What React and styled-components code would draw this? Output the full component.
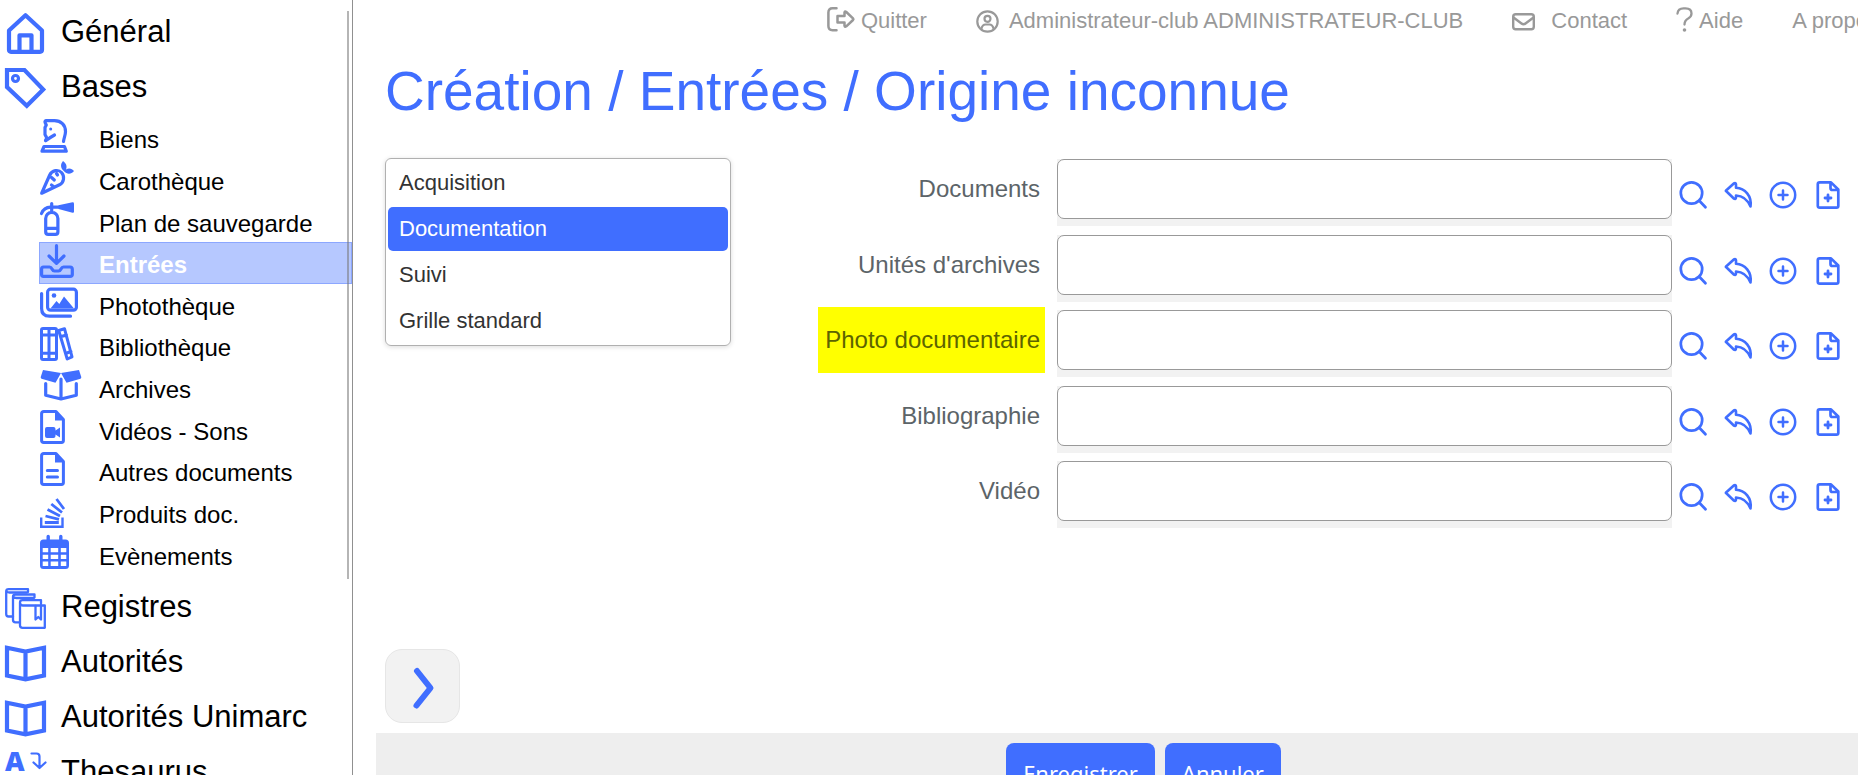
import { useState } from "react";
import styled, { createGlobalStyle, css } from "styled-components";

/* =========================
    Theme values
========================= */

const BLUE = "#406eff";
const GREY = "#999999";

const GlobalStyle = createGlobalStyle`
  * {
    box-sizing: border-box;
  }

  body {
    margin: 0;
    background: #ffffff;
    font-family: "Liberation Sans", Arial, sans-serif;
    color: #000000;
  }

  a {
    color: inherit;
    text-decoration: none;
  }

  svg {
    display: block;
    flex-shrink: 0;
    overflow: visible;
  }
`;

/* =========================
    Icons
========================= */

const Icon = styled.svg`
  fill: none;
  stroke: currentColor;
  stroke-linecap: round;
  stroke-linejoin: round;

  .solid {
    fill: currentColor;
    stroke: none;
  }
`;

const HomeIcon = () => (
  <Icon width="41" height="41" strokeWidth="4.2">
    <path d="M4 17.5 20.5 2.2 37 17.5V36.8q0 2-2 2H6q-2 0-2-2z" />
    <path d="M14.5 38V22.3h12V38" />
  </Icon>
);

const TagIcon = () => (
  <Icon width="41" height="41" strokeWidth="4.2">
    <path d="M2 2h17.5L38.2 21.5 21.8 37.8 2 19z" strokeLinejoin="miter" />
    <circle cx="10.5" cy="10.5" r="3" strokeWidth="3.2" />
  </Icon>
);

const RegisterIcon = () => (
  <Icon width="41" height="41" strokeWidth="2.3">
    <path d="M8 28.5H3.5Q1.2 28.5 1.2 26V3.5q0-2.3 2.5-2.3H23V4M1.2 3Q2 4.5 4.5 4.500H22" />
    <path d="M14.500 34.300H10.500Q8 34.300 8 32V9q0-2.500 2.500-2.500H29.500v3M8 8.500Q9 10 11.500 10H29" />
    <path d="M36 15.500V12.200H17.500Q15 12.200 15 14.500V37.500Q15 39.800 17.500 39.800H39.800V17.500H18Q15.500 17.500 15 15" />
    <path d="M30.500 18V31.500L33.300 29 36 31.500V18" />
  </Icon>
);

const BookIcon = () => (
  <Icon width="41" height="37" strokeWidth="4.200">
    <path
      d="M2 2.800 20.500 6.500 39 2.800V30.500L20.500 34.300 2 30.500zM20.500 6.500V34.300"
      strokeLinejoin="miter"
    />
  </Icon>
);

const ThesaurusIcon = () => (
  <Icon width="41" height="44" strokeWidth="2.200">
    <text
      className="solid"
      x="0"
      y="19"
      fontFamily="Noto Sans, sans-serif"
      fontWeight="900"
      fontSize="27"
    >
      A
    </text>
    <path d="M26.500 1.500h5q3 0 3 3V15.500M28.500 10.500l6 5.500 6-5.500" />
  </Icon>
);

const KnightIcon = () => (
  <Icon width="42" height="34" strokeWidth="3.200">
    <path d="M4 27.500h20.500L26.300 32.200H2z" />
    <path d="M23.500 22.500C24 18.500 25.500 16 25.500 12.500 25.500 6 21 1.700 14.500 1.700H6Q4.200 2 5.500 4.500L6.300 6 5 8.500V15.500L6.800 19 5.500 21.500" />
    <path d="M6 21.500Q10 18.500 14.500 16" />
    <circle className="solid" cx="10.700" cy="10" r="1.500" />
  </Icon>
);

const CarrotIcon = () => (
  <Icon width="42" height="34" strokeWidth="3.200">
    <path d="M1.700 32.200 9.500 14.500C12 8.800 18.500 8.300 21.500 11.500 25 15.500 24 21.300 19.500 23.800z" />
    <path d="M11.500 16.500 14.300 19M16.500 12.500 17.500 14M11.500 24 13.500 25.500" />
    <path className="solid" d="M23.800 10C20 6.500 20.500 3 23 0 26.500 2.500 27.300 5.500 26 8.500 29 6.500 32 7.500 34 10 31 13.500 27 13.500 23.800 10z" />
  </Icon>
);

const ExtinguisherIcon = () => (
  <Icon width="42" height="34" strokeWidth="3.200">
    <path d="M5.700 30V16.500a6.100 6.100 0 0 1 12.200 0V30q0 2.300-2.500 2.300H8.200q-2.500 0-2.500-2.300zM6 26.300H18M11.700 1.500V9" />
    <path d="M1.500 11.500Q4 5.500 10.500 5.200H20" />
    <path className="solid" d="M18.500 3.300 32.500.300Q34 .200 34 1.500V9.500Q34 11 32.500 10.700L18.500 7z" />
  </Icon>
);

const InboxIcon = () => (
  <Icon width="42" height="34" strokeWidth="3.200">
    <path d="M16.500 1.700V18.500M9 12 16.500 19.300 24 12" />
    <path d="M3.500 23H9.500Q11 23 12 25T14.500 27H18.500Q20 27 21 25T23.500 23H30Q32.300 23 32.300 25.300V30.500Q32.300 32.300 30 32.300H3.500Q1.600 32.300 1.600 30.500V25Q1.600 23 3.500 23z" />
  </Icon>
);

const PhotosIcon = () => (
  <Icon width="42" height="34" strokeWidth="3.200">
    <rect x="7.600" y="3.200" width="28.800" height="21" rx="3" />
    <path d="M1.600 7.500V22.500Q1.600 30.200 9.500 30.200H30.500" />
    <circle className="solid" cx="14" cy="9.500" r="2.300" />
    <path className="solid" d="M10.500 22.500 16.500 15 19.300 18 24 10.500 34 22.500z" />
  </Icon>
);

const BooksIcon = () => (
  <Icon width="42" height="34" strokeWidth="3">
    <rect x="1.500" y="1.500" width="15" height="31" rx="1.500" />
    <path d="M9 1.500V32.500M1.500 8H16.500M1.500 26.300H16.500" />
    <path d="M18.700 3.500 24.500 1.700 32 29.800 27.200 32 18.700 3.500M20.500 9.800 26.500 8M25.500 26.500 31 24.500" />
  </Icon>
);

const BoxOpenIcon = () => (
  <Icon width="42" height="34" strokeWidth="3.200">
    <path className="solid" d="M3 1 21 4 15.500 13.800 1.500 9.800Q.300 9 .800 7.800zM39 1 21 4 26.500 13.800 40.500 9.800Q41.700 9 41.200 7.800z" />
    <path d="M5.700 14.500V26.300L21 30 36.300 26.300V14.500M21 10V30" />
  </Icon>
);

const FileShape = () => (
  <>
    <path d="M3.800 1.600H16L23.400 9.500V30.500Q23.400 32.400 21.500 32.400H3.800Q1.600 32.400 1.600 30.500V3.500Q1.600 1.600 3.800 1.600z" />
    <path className="solid" d="M15 1V10.500H24.500z" />
  </>
);

const FileVideoIcon = () => (
  <Icon width="42" height="34" strokeWidth="3">
    <FileShape />
    <path className="solid" d="M7 17H13.500Q15.500 17 15.500 19V20.500L20 17.500V27.500L15.500 24.500V26Q15.500 28 13.500 28H7Q5 28 5 26V19Q5 17 7 17z" />
  </Icon>
);

const FileLinesIcon = () => (
  <Icon width="42" height="34" strokeWidth="3">
    <FileShape />
    <path d="M7.300 18.500H17.500M7.300 25H17.500" />
  </Icon>
);

const StackIcon = () => (
  <Icon width="42" height="34" strokeWidth="2.800">
    <g strokeLinecap="butt" strokeLinejoin="miter" transform="translate(0 1)">
      <path d="M1.200 22.500V31.700H22.500V22.500" strokeWidth="2.400" />
      <path d="M4.800 27.500H18.800M5.500 21 19 24.300M7.500 14.500 20 21M11.300 9 22 17.500M16.500 4 24 14" />
    </g>
  </Icon>
);

const CalendarIcon = () => (
  <Icon width="42" height="34" strokeWidth="3.400">
    <path d="M8.200 1.500V7M20.800 1.500V7" />
    <path
      className="solid"
      fillRule="evenodd"
      d="M3.500 4.500h22q3.500 0 3.500 3.500v22.500q0 3.500-3.500 3.500h-22q-3.500 0-3.500-3.500V8q0-3.500 3.500-3.500zM2.700 13v4.200h5.500V13zM10.700 13v4.200h7.500V13zM20.800 13v4.200h5.500V13zM2.700 19.800v4.200h5.500v-4.200zM10.700 19.800v4.200h7.500v-4.200zM20.800 19.800v4.200h5.500v-4.200zM2.700 26.600V31h5.500v-4.400zM10.700 26.600V31h7.500v-4.400zM20.800 26.600V31h5.500v-4.400z"
    />
  </Icon>
);

const QuitIcon = () => (
  <Icon width="28" height="28" strokeWidth="2.500">
    <path d="M9.500 1.300H5.500Q1.400 1.300 1.400 5.500V19Q1.400 23.200 5.500 23.200H9.500" />
    <path d="M10.500 9H17.500V5.500Q17.800 3.800 19.300 5L26 11.300Q26.800 12.200 26 13L19.300 19.300Q17.800 20.300 17.500 18.800V15.500H10.500z" />
  </Icon>
);

const UserIcon = () => (
  <Icon width="23" height="23" strokeWidth="2.200">
    <circle cx="11.500" cy="11.500" r="10.200" />
    <circle cx="11.500" cy="8.800" r="3" />
    <path d="M5.500 18.500Q6.500 14.500 9.500 14.500H13.500Q16.500 14.500 17.500 18.500" />
  </Icon>
);

const MailIcon = () => (
  <Icon width="23" height="17" strokeWidth="2.400">
    <rect x="1.200" y="1.200" width="20.600" height="15" rx="2.500" />
    <path d="M1.500 4.500 9.500 10.500Q11.500 12 13.500 10.500L21.500 4.500" />
  </Icon>
);

const HelpIcon = () => (
  <Icon width="17" height="28" strokeWidth="2.300">
    <path d="M1.500 6.500Q2 1.300 7.500 1.300H9.500Q15.500 1.300 15.500 6.500 15.500 9.500 12.500 11.300 8.500 13.500 8.500 17.500" />
    <circle className="solid" cx="8.500" cy="23" r="1.800" />
  </Icon>
);

const SearchIcon = () => (
  <Icon width="28" height="28" strokeWidth="2.700">
    <circle cx="12.500" cy="12" r="10.700" />
    <path d="M20.300 19.800 26.500 26.300" />
  </Icon>
);

const ReplyIcon = () => (
  <Icon width="28" height="28" strokeWidth="2.600">
    <path d="M1.800 9.800 9.800 2.500Q11.800 1.500 12 3.500V6.800C21 7.300 28 15 26.500 25.500 23.500 18.500 19 14.800 12 14.500V16.500Q11.800 18.500 9.800 17.500z" />
  </Icon>
);

const AddIcon = () => (
  <Icon width="28" height="28" strokeWidth="2.500">
    <circle cx="14" cy="14" r="12.200" />
    <path d="M14 9.500V18.500M9.500 14H18.500" />
  </Icon>
);

const FilePlusIcon = () => (
  <Icon width="28" height="28" strokeWidth="2.700">
    <path d="M5.700 1.400H17L24.300 8.500V25Q24.300 26.600 22.500 26.600H5.700Q3.800 26.600 3.800 25V3Q3.800 1.400 5.700 1.400zM16.500 1.500V7Q16.500 9 18.500 9H24" />
    <path d="M14 14V20M11 17H17" strokeWidth="2.800" />
  </Icon>
);

const NextIcon = () => (
  <Icon width="28" height="42" strokeWidth="6">
    <path d="M8 4 21.500 21 7.500 38.500" />
  </Icon>
);

/* =========================
    Sidebar
========================= */

const Page = styled.div`
  display: flex;
  height: 100vh;
  overflow: hidden;
`;

const Sidebar = styled.nav`
  flex: 0 0 353px;
  padding-top: 4px;
  border-right: 1px solid #909090;
`;

const ScrollGroup = styled.div`
  position: relative;
  padding-bottom: 4px;

  /* thin scroll bar over the open group */
  &::after {
    content: "";
    position: absolute;
    top: 7px;
    right: 3px;
    bottom: 0;
    width: 2px;
    background: rgba(120, 120, 120, 0.55);
  }
`;

const MenuLink = styled.a`
  display: flex;
  align-items: center;
  gap: 15px;
  height: 55px;
  padding-left: 5px;
  font-size: 31px;
  white-space: nowrap;

  svg {
    margin-top: 4px;
    color: ${BLUE};
  }
`;

const SubMenu = styled.div`
  display: grid;
  grid-auto-rows: 1fr;
  min-height: 458px;
  margin-top: 3px;
  padding-left: 39px;
`;

const SubLink = styled.a`
  display: flex;
  align-items: center;
  gap: 17px;
  padding-top: 1px;
  border: 1px solid transparent;
  font-size: 24px;
  white-space: nowrap;

  svg {
    align-self: flex-start;
    color: ${BLUE};
  }

  ${({ $active }) =>
    $active &&
    css`
      background: rgba(64, 110, 255, 0.38);
      border-color: #8ca7ff;
      color: #ffffff;
      font-weight: 700;
    `}
`;

const SubLabel = styled.span`
  padding-top: 4px;
`;

/* =========================
    Main area
========================= */

/* The main column is a little larger than the window and runs off it */
const Main = styled.main`
  display: flex;
  flex: 1;
  flex-direction: column;
  min-width: 0;
  height: calc(100vh + 38px);
  padding-left: 23px;
`;

const TopBar = styled.header`
  display: flex;
  flex-shrink: 0;
  justify-content: flex-end;
  align-items: center;
  gap: 49px;
  height: 42px;
  margin-right: -53px;
  padding-right: 32px;
  color: ${GREY};
  font-size: 22px;
`;

const TopLink = styled.a`
  display: flex;
  align-items: center;
  gap: ${({ $gap }) => $gap || 6}px;
  white-space: nowrap;
`;

const Title = styled.h1`
  margin: 17px 0 33px 9px;
  color: ${BLUE};
  font-size: 55px;
  font-weight: 400;
  line-height: 64px;
`;

const Content = styled.div`
  display: flex;
  align-items: flex-start;
  gap: 87px;
  padding: 0 16px 0 9px;
`;

const TabCard = styled.div`
  display: flex;
  flex: 0 0 346px;
  flex-direction: column;
  gap: 2px;
  margin-top: 2px;
  padding: 2px;
  border: 1px solid #b0b0b0;
  border-radius: 6px;
  box-shadow: 0 1px 5px rgba(0, 0, 0, 0.14);
`;

const TabButton = styled.button`
  height: 44px;
  padding: 0 11px;
  border: none;
  border-radius: 5px;
  background: ${({ $active }) => ($active ? BLUE : "transparent")};
  color: ${({ $active }) => ($active ? "#ffffff" : "#333333")};
  font-family: inherit;
  font-size: 22px;
  text-align: left;
  cursor: pointer;
`;

const Form = styled.form`
  display: grid;
  flex: 1;
  grid-auto-rows: 1fr;
  min-height: 378px;
`;

const FieldRow = styled.div`
  display: grid;
  grid-template-columns: 227px 1fr auto;
  align-items: start;
`;

const FieldLabel = styled.label`
  padding: 0 5px;
  background: ${({ $marked }) => ($marked ? "#ffff00" : "transparent")};
  color: ${({ $marked }) => ($marked ? "#5c6400" : "#5c6468")};
  font-size: 24px;
  line-height: 66px;
  text-align: right;
  white-space: nowrap;
`;

const InputWrap = styled.div`
  display: flex;
  margin: 3px 7px 0 12px;
  padding-bottom: 7px;
  background: #f2f2f2;
`;

const TextInput = styled.input`
  width: 100%;
  height: 60px;
  padding: 0 12px;
  border: 1px solid ${GREY};
  border-radius: 7px;
  background: #ffffff;
  font-family: inherit;
  font-size: 22px;
`;

const Actions = styled.div`
  display: flex;
  gap: 17px;
  padding-top: 25px;
`;

const IconButton = styled.button`
  padding: 0;
  border: none;
  background: none;
  color: ${BLUE};
  cursor: pointer;
`;

const NextButton = styled.button`
  display: flex;
  justify-content: center;
  align-items: center;
  width: 75px;
  height: 74px;
  margin: auto 0 10px 9px;
  padding: 3px 0 0;
  border: 1px solid #e6e6e6;
  border-radius: 17px;
  background: #f2f2f2;
  color: ${BLUE};
  cursor: pointer;
`;

const Footer = styled.footer`
  display: flex;
  flex-shrink: 0;
  justify-content: center;
  gap: 10px;
  height: 80px;
  margin-right: -53px;
  padding: 10px 0;
  background: #eeeeee;
`;

const FooterButton = styled.button`
  padding: 0 17px;
  border: none;
  border-radius: 8px;
  background: ${BLUE};
  color: #ffffff;
  font-family: "Noto Sans", sans-serif;
  font-size: 22px;
  cursor: pointer;
`;

/* =========================
    Data
========================= */

const BASES = [
  { label: "Biens", icon: KnightIcon },
  { label: "Carothèque", icon: CarrotIcon },
  { label: "Plan de sauvegarde", icon: ExtinguisherIcon },
  { label: "Entrées", icon: InboxIcon, active: true },
  { label: "Photothèque", icon: PhotosIcon },
  { label: "Bibliothèque", icon: BooksIcon },
  { label: "Archives", icon: BoxOpenIcon },
  { label: "Vidéos - Sons", icon: FileVideoIcon },
  { label: "Autres documents", icon: FileLinesIcon },
  { label: "Produits doc.", icon: StackIcon },
  { label: "Evènements", icon: CalendarIcon },
];

const LOWER_MENU = [
  { label: "Registres", icon: RegisterIcon },
  { label: "Autorités", icon: BookIcon },
  { label: "Autorités Unimarc", icon: BookIcon },
  { label: "Thesaurus", icon: ThesaurusIcon },
];

const TABS = ["Acquisition", "Documentation", "Suivi", "Grille standard"];

const FIELDS = [
  { id: "documents", label: "Documents" },
  { id: "unites", label: "Unités d'archives" },
  { id: "photo", label: "Photo documentaire", marked: true },
  { id: "bibliographie", label: "Bibliographie" },
  { id: "video", label: "Vidéo" },
];

const ACTIONS = [
  { label: "Rechercher", icon: SearchIcon },
  { label: "Rétablir", icon: ReplyIcon },
  { label: "Ajouter", icon: AddIcon },
  { label: "Nouvelle fiche", icon: FilePlusIcon },
];

/* =========================
    Components
========================= */

const MenuItem = ({ icon: ItemIcon, label }) => (
  <MenuLink href="#">
    <ItemIcon />
    {label}
  </MenuLink>
);

const Field = ({ id, label, marked }) => (
  <FieldRow>
    <FieldLabel htmlFor={id} $marked={marked}>
      {label}
    </FieldLabel>
    <InputWrap>
      <TextInput id={id} type="text" />
    </InputWrap>
    <Actions>
      {ACTIONS.map(({ label: action, icon: ActionIcon }) => (
        <IconButton key={action} type="button" aria-label={action}>
          <ActionIcon />
        </IconButton>
      ))}
    </Actions>
  </FieldRow>
);

export default function App() {
  const [tab, setTab] = useState("Documentation");

  return (
    <>
      <GlobalStyle />
      <Page>
        <Sidebar>
          <ScrollGroup>
            <MenuItem icon={HomeIcon} label="Général" />
            <MenuItem icon={TagIcon} label="Bases" />
            <SubMenu>
              {BASES.map(({ label, icon: ItemIcon, active }) => (
                <SubLink key={label} href="#" $active={active}>
                  <ItemIcon />
                  <SubLabel>{label}</SubLabel>
                </SubLink>
              ))}
            </SubMenu>
          </ScrollGroup>
          {LOWER_MENU.map((item) => (
            <MenuItem key={item.label} {...item} />
          ))}
        </Sidebar>

        <Main>
          <TopBar>
            <TopLink href="#">
              <QuitIcon />
              Quitter
            </TopLink>
            <TopLink href="#" $gap={10}>
              <UserIcon />
              Administrateur-club ADMINISTRATEUR-CLUB
            </TopLink>
            <TopLink href="#" $gap={16}>
              <MailIcon />
              Contact
            </TopLink>
            <TopLink href="#">
              <HelpIcon />
              Aide
            </TopLink>
            <TopLink href="#">A propos</TopLink>
          </TopBar>

          <Title>Création / Entrées / Origine inconnue</Title>

          <Content>
            <TabCard>
              {TABS.map((name) => (
                <TabButton
                  key={name}
                  type="button"
                  $active={name === tab}
                  onClick={() => setTab(name)}
                >
                  {name}
                </TabButton>
              ))}
            </TabCard>
            <Form>
              {FIELDS.map((field) => (
                <Field key={field.id} {...field} />
              ))}
            </Form>
          </Content>

          <NextButton type="button" aria-label="Suivant">
            <NextIcon />
          </NextButton>

          <Footer>
            <FooterButton type="button">Enregistrer</FooterButton>
            <FooterButton type="button">Annuler</FooterButton>
          </Footer>
        </Main>
      </Page>
    </>
  );
}
